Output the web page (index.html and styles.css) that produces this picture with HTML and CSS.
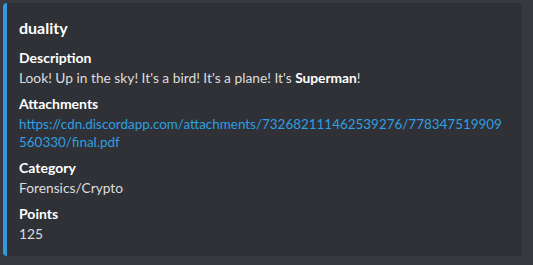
FILE: index.html
```html
<!DOCTYPE html>
<html>
<head>
<meta charset="utf-8">
<link rel="stylesheet" href="styles.css">
</head>
<body>
<div class="embed">
  <div class="title">duality</div>
  <div class="fields">
    <div class="field">
      <div class="name">Description</div>
      <div class="value">Look! Up in the sky! It's a bird! It's a plane! It's <strong>Superman</strong>!</div>
    </div>
    <div class="field">
      <div class="name">Attachments</div>
      <div class="value value-link"><a class="link" href="#">https://cdn.discordapp.com/attachments/732682111462539276/778347519909<br>560330/final.pdf</a></div>
    </div>
    <div class="field">
      <div class="name">Category</div>
      <div class="value">Forensics/Crypto</div>
    </div>
    <div class="field">
      <div class="name">Points</div>
      <div class="value">125</div>
    </div>
  </div>
</div>
</body>
</html>
```
FILE: styles.css
```css
html, body {
  margin: 0;
  padding: 0;
  background: #36393f;
  height: 100%;
}
body {
  padding: 3px 11px 9px 3px;
  box-sizing: border-box;
  font-family: Lato, "Noto Sans", sans-serif;
}
.embed {
  background: #2f3136;
  border-left: 4px solid #3498db;
  border-radius: 4px;
  padding: 8px 16px 16px 12px;
  height: 100%;
  box-sizing: border-box;
}
.title {
  color: #ffffff;
  font-size: 16px;
  font-weight: 700;
  line-height: 22px;
  margin-top: 6px;
}
.fields {
  display: flex;
  flex-direction: column;
  gap: 8px;
  margin-top: 10px;
}
.name {
  color: #ffffff;
  font-size: 14px;
  font-weight: 700;
  line-height: 18px;
  margin-bottom: 2px;
}
.value {
  color: #dcddde;
  font-size: 13.75px;
  line-height: 18px;
  white-space: nowrap;
}
.value-link {
  font-size: 13.45px;
}
.value strong {
  color: #ffffff;
  font-weight: 700;
}
.link {
  color: #2e9fe0;
  text-decoration: none;
}
```
